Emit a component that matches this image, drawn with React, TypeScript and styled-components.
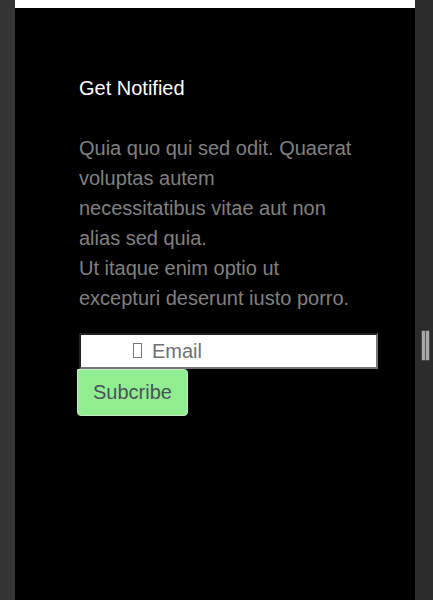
import React from "react";
import styled, { createGlobalStyle } from "styled-components";

const Global = createGlobalStyle`
  html, body { margin: 0; padding: 0; background: #353535; }
  body { font-family: "Liberation Sans", Arial, sans-serif; }
`;

const Shell = styled.div`
  display: flex;
  width: 433px;
  height: 600px;
  overflow: hidden;
`;

const LeftGutter = styled.div`
  width: 15px;
  flex: none;
  background: #353535;
`;

const RightGutter = styled.div`
  width: 18px;
  flex: none;
  background: #2c2c2c;
  display: flex;
  align-items: flex-start;
  justify-content: center;
  padding-top: 331px;
  box-sizing: border-box;
`;

const Handle = styled.div`
  display: flex;
  gap: 1px;
  margin-left: 2px;
`;

const HandleBar = styled.div`
  width: 3px;
  height: 29px;
  background: #a8a8a8;
  box-shadow: 0 0 0 0.5px #666;
`;

const Panel = styled.div`
  width: 400px;
  flex: none;
  background: #000;
  display: flex;
  flex-direction: column;
`;

const TopStrip = styled.div`
  height: 8px;
  background: #fff;
`;

const Content = styled.div`
  padding: 69px 0 0 64px;
  display: flex;
  flex-direction: column;
`;

const Heading = styled.h3`
  margin: 0;
  color: #fff;
  font-size: 20px;
  font-weight: 400;
  line-height: 23px;
`;

const Text = styled.p`
  margin: 33px 0 0;
  color: #808080;
  font-size: 20px;
  line-height: 30px;
  max-width: 282px;
`;

const Form = styled.form`
  margin-top: 20px;
  display: flex;
  flex-direction: column;
  align-items: flex-start;
`;

const InputWrap = styled.div`
  position: relative;
  width: 299px;
  height: 36px;
`;

const EmailInput = styled.input`
  width: 100%;
  height: 100%;
  box-sizing: border-box;
  border: 2px solid #767676;
  border-style: inset;
  background: #fff;
  padding: 0 0 0 71px;
  font-family: "Liberation Sans", Arial, sans-serif;
  font-size: 20px;
  color: #333;
  outline: none;
  &::placeholder { color: #707070; }
`;

const IconBox = styled.span`
  position: absolute;
  left: 54px;
  top: 10px;
  width: 7px;
  height: 13px;
  border: 1px solid #777;
  pointer-events: none;
`;

const SubmitButton = styled.button`
  margin-left: -2px;
  width: 111px;
  height: 47px;
  box-sizing: border-box;
  background: #90ee90;
  border: 1px solid #c8e8c8;
  border-radius: 0 4px 4px 4px;
  color: #4b525a;
  font-family: "Liberation Sans", Arial, sans-serif;
  font-size: 20px;
  padding: 0;
  text-align: center;
  cursor: pointer;
`;

export default function App() {
  return (
    <>
      <Global />
      <Shell>
        <LeftGutter />
        <Panel>
          <TopStrip />
          <Content>
            <Heading>Get Notified</Heading>
            <Text>
              Quia quo qui sed odit. Quaerat voluptas autem
              <br />
              necessitatibus vitae aut non alias sed quia.
              <br />
              Ut itaque enim optio ut excepturi deserunt iusto porro.
            </Text>
            <Form onSubmit={(e) => e.preventDefault()}>
              <InputWrap>
                <IconBox />
                <EmailInput type="email" placeholder="Email" />
              </InputWrap>
              <SubmitButton type="submit">Subcribe</SubmitButton>
            </Form>
          </Content>
        </Panel>
        <RightGutter>
          <Handle>
            <HandleBar />
            <HandleBar />
          </Handle>
        </RightGutter>
      </Shell>
    </>
  );
}
